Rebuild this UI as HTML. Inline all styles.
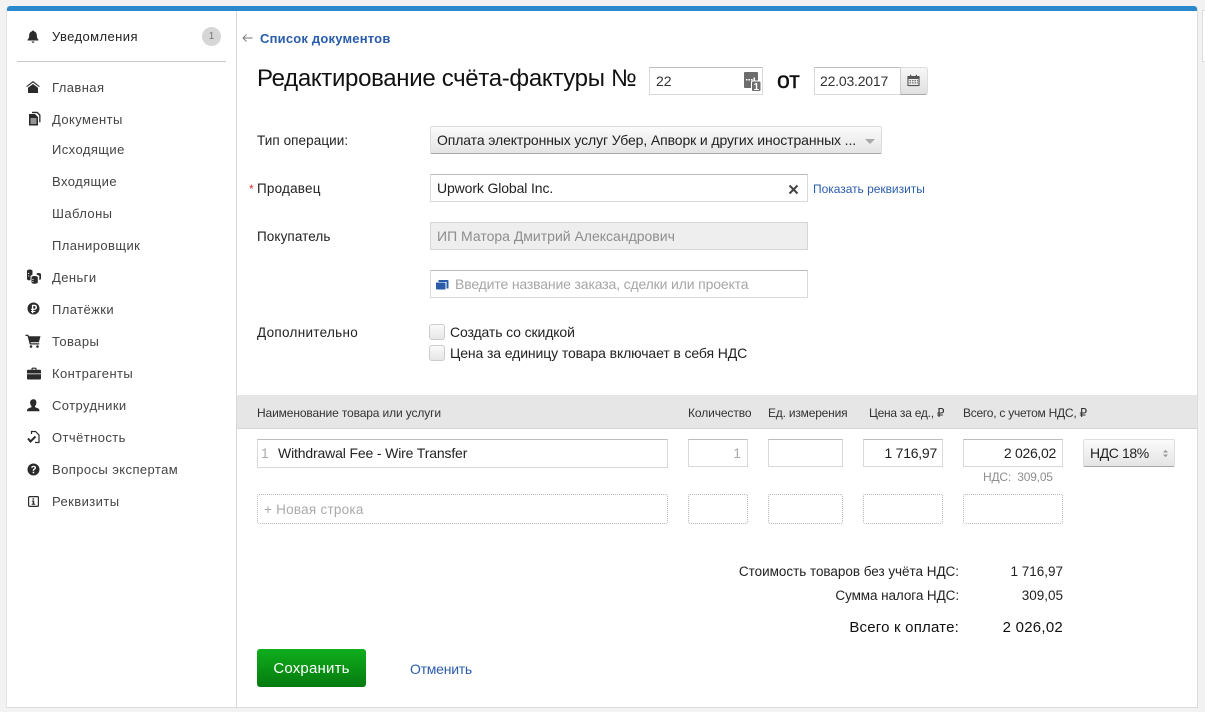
<!DOCTYPE html>
<html lang="ru"><head><meta charset="utf-8"><title>Редактирование счёта-фактуры</title>
<style>
html,body{margin:0;padding:0;width:1205px;height:712px;overflow:hidden;background:#f2f2f2}
body{font-family:"Liberation Sans","DejaVu Sans",sans-serif;font-size:13px;color:#222;position:relative}
.a{position:absolute;box-sizing:border-box}
.t{position:absolute;white-space:nowrap;line-height:18px;height:18px}
.r{text-align:right}
.box{position:absolute;box-sizing:border-box;background:#fff;border:1px solid #d9d9d9;border-top-color:#bcbcbc}
.dot{position:absolute;box-sizing:border-box;background:#fff;border:1px dotted #b8b8b8;border-radius:2px}
.nav{color:#444;letter-spacing:.42px}
.ic{position:absolute;fill:#2b2b2b}
.th{font-size:12px;color:#333}
.f{font-size:14px;color:#222}
.cb{position:absolute;box-sizing:border-box;width:16px;height:16px;border:1px solid #ccc;border-radius:3px;background:linear-gradient(#fafafa,#e6e6e6)}
.sel{position:absolute;box-sizing:border-box;border-radius:2px;background:linear-gradient(#fbfbfb,#e4e4e4);border:1px solid #ddd;border-bottom-color:#a8a8a8}
</style></head><body>

<div class="a" style="left:1202px;top:10px;width:10px;height:52px;background:#fff;border:1px solid #ddd"></div>
<div class="a" style="left:6px;top:6px;width:1192px;height:702px;background:#fff;border-right:1px solid #dcdcdc;border-bottom:1px solid #dcdcdc;border-left:1px solid #e4e4e4;border-radius:3px 3px 0 0"></div>
<div class="a" style="left:7px;top:6px;width:1190px;height:5px;background:#2a88cc;border-radius:3px 3px 0 0"></div>
<div class="a" style="left:236px;top:11px;width:1px;height:696px;background:#d8d8d8"></div>

<!-- sidebar -->
<svg class="ic" style="left:26px;top:29px" width="14" height="15" viewBox="0 0 14 15"><path d="M7 1.500c.6 0 1 .4 1 .9 2 .5 2.800 2 2.800 4 0 2.200.6 3.400 1.700 4.400v.7H1.500v-.7C2.600 9.800 3.200 8.600 3.200 6.400c0-2 .8-3.500 2.800-4 0-.5.4-.9 1-.9zM5.600 12.500h2.800c0 .8-.6 1.300-1.400 1.300s-1.400-.5-1.400-1.300z"/></svg>
<div class="t" style="left:52px;top:28px;color:#222;letter-spacing:.42px">Уведомления</div>
<div class="a" style="left:202px;top:27px;width:19px;height:19px;border-radius:50%;background:#d6d6d6;color:#777;font-size:10px;line-height:19px;text-align:center">1</div>
<div class="a" style="left:17px;top:61px;width:209px;height:1px;background:#c9c9c9"></div>

<svg class="ic" style="left:26px;top:81px" width="14" height="12" viewBox="0 0 14 12"><path d="M7 0l6.800 5.200-.7.800L7 1.500.9 6l-.7-.8zM7 3l5 3.700V12H2V6.700z"/></svg>
<div class="t nav" style="left:52px;top:79px">Главная</div>
<svg class="ic" style="left:28px;top:111px" width="13" height="15" viewBox="0 0 13 15"><path d="M1 3h6l3 3v8.500H1zM2.500 7.500v1h6v-1zM2.500 9.500v1h6v-1zM2.500 11.500v1h6v-1z" fill-rule="evenodd"/><path d="M4 .8h5.500l3 3v7.500h-1.300V4.500L9 2.100H4z"/></svg>
<div class="t nav" style="left:52px;top:111px">Документы</div>
<div class="t nav" style="left:52px;top:141px">Исходящие</div>
<div class="t nav" style="left:52px;top:173px">Входящие</div>
<div class="t nav" style="left:52px;top:205px">Шаблоны</div>
<div class="t nav" style="left:52px;top:237px">Планировщик</div>

<svg class="ic" style="left:26px;top:269px" width="16" height="15" viewBox="0 0 16 15"><path d="M1 2c0-1 1.300-1.500 2.800-1.500S6.500 1 6.500 2v3.500L4.500 7v4.300c-2 .2-3.500-.3-3.500-1.300z"/><path d="M12.500 4c1.300 0 2.500.4 2.500 1.300v4.500c0 .6-.8 1-1.700 1.200V6.800l-2.800-1.300V5c0-.7 1-1 2-1z"/><path d="M8.500 7c1.500 0 3.300.4 3.300 1.400v4.800c0 1-1.600 1.500-3.300 1.500s-3-.5-3-1.500V8.400C5.500 7.400 7 7 8.500 7z"/><path d="M6.300 10h1.200v.9H6.300zM6.300 12h1.200v.9H6.300zM2 4h1.200v.9H2zM2 6.500h1.200v.9H2z" fill="#fff"/></svg>
<div class="t nav" style="left:52px;top:269px">Деньги</div>
<svg class="ic" style="left:27px;top:302px" width="13" height="13" viewBox="0 0 13 13"><path fill-rule="evenodd" d="M6.500.5a6 6 0 1 1 0 12 6 6 0 0 1 0-12zM4.900 2.800v3.900H4v1.200h.9V9H4v1h.9v1.200h1.400V10h2V9h-2V7.900h1.200c1.500 0 2.500-1 2.500-2.600S8.900 2.800 7.500 2.800zM6.300 4h1.100c.7 0 1.100.5 1.100 1.300s-.4 1.400-1.100 1.400H6.300z"/></svg>
<div class="t nav" style="left:52px;top:301px">Платёжки</div>
<svg class="ic" style="left:25px;top:334px" width="16" height="14" viewBox="0 0 16 14"><path d="M.5 .8h2.800l.6 1.500h11.600l-1.600 6H5.600l.3 1h8.300v1.200H4.800L2.500 2H.5z"/><circle cx="6" cy="12.500" r="1.300"/><circle cx="12.500" cy="12.500" r="1.300"/></svg>
<div class="t nav" style="left:52px;top:333px">Товары</div>
<svg class="ic" style="left:27px;top:367px" width="14" height="13" viewBox="0 0 14 13"><path fill-rule="evenodd" d="M4.500 2.800V1.500c0-.5.400-.9 1-.9h3c.6 0 1 .4 1 .9v1.300H13c.6 0 1 .4 1 1v2.700H0V3.800c0-.6.400-1 1-1zM5.600 1.700v1.100h2.800V1.700z"/><path d="M0 7.300h14v4.200c0 .6-.4 1-1 1H1c-.6 0-1-.4-1-1z"/></svg>
<div class="t nav" style="left:52px;top:365px">Контрагенты</div>
<svg class="ic" style="left:27px;top:399px" width="13" height="13" viewBox="0 0 13 13"><path d="M6.500.3c1.800 0 2.900 1.300 2.900 3.200 0 1.500-.6 2.900-1.400 3.600v1c1 .6 4.400 1.100 4.400 3v1.200H.1v-1.200c0-1.900 3.400-2.400 4.400-3v-1c-.8-.7-1.400-2.100-1.400-3.600C3.100 1.600 4.700.3 6.500.3z"/></svg>
<div class="t nav" style="left:52px;top:397px">Сотрудники</div>
<svg class="ic" style="left:27px;top:430px" width="13" height="14" viewBox="0 0 13 14" fill="none" stroke="#2b2b2b"><path d="M4.500 4V1.500h4l3.500 3.500v7.500H8" stroke-width="1.200" fill="none"/><path d="M1 8.500l2.500 3L8.500 6.500" stroke-width="2" fill="none"/></svg>
<div class="t nav" style="left:52px;top:429px">Отчётность</div>
<svg class="ic" style="left:27px;top:463px" width="13" height="13" viewBox="0 0 13 13"><path fill-rule="evenodd" d="M6.500.5a6 6 0 1 1 0 12 6 6 0 0 1 0-12zM6.600 2.700c-1.400 0-2.400.7-2.500 2.100h1.500c.1-.6.400-.9 1-.9.500 0 .9.300.9.800 0 .4-.3.700-.8 1.100-.8.500-1 1-1 2h1.400c0-.6.100-.8.700-1.200.7-.5 1.200-1 1.200-1.900 0-1.200-1-2-2.400-2zM5.700 8.700v1.500h1.500V8.700z"/></svg>
<div class="t nav" style="left:52px;top:461px">Вопросы экспертам</div>
<svg class="ic" style="left:28px;top:496px" width="11" height="11" viewBox="0 0 11 11"><rect x=".6" y=".6" width="9.800" height="9.800" rx="1" fill="none" stroke="#2b2b2b" stroke-width="1.200"/><path d="M4.500 2.300h1.600v1.300H4.500zM3.800 4.500h2.400v3.300H7.300v1H3.700v-1h1V5.500h-.9z"/></svg>
<div class="t nav" style="left:52px;top:493px">Реквизиты</div>

<!-- header -->
<svg class="a" style="left:242px;top:33px" width="11" height="10" viewBox="0 0 11 10"><path d="M10.500 5H1.200M4.500 1.500L1 5l3.500 3.500" fill="none" stroke="#777" stroke-width=".9"/></svg>
<div class="t" style="left:260px;top:30px;color:#2a5caa;font-weight:bold;letter-spacing:.2px">Список документов</div>
<div class="t" style="left:257px;top:64px;height:30px;line-height:30px;font-size:24px;color:#111;letter-spacing:-.32px">Редактирование счёта-фактуры №</div>

<div class="box" style="left:649px;top:67px;width:114px;height:28px"></div>
<div class="t f" style="left:656px;top:72px;color:#333">22</div>
<svg class="a" style="left:743px;top:71px" width="18" height="21" viewBox="0 0 18 21"><path d="M2 1h12c.6 0 1 .4 1 1v15H2c-.6 0-1-.4-1-1V2c0-.6.400-1 1-1z" fill="#6d6d6d"/><path d="M3 8h1.500v1.500H3zM5.500 8H7v1.500H5.500zM8 8h1.500v1.500H8zM10.500 6.500H12v3h-1.500z" fill="#fff"/><rect x="8" y="9.500" width="10" height="11" rx="1.500" fill="#fff"/><rect x="9" y="10.500" width="8.500" height="9.500" rx="1" fill="#6d6d6d"/><text x="10.500" y="19" font-size="10" font-weight="bold" fill="#fff" font-family="Liberation Sans">1</text></svg>
<div class="t" style="left:777px;top:66px;height:28px;line-height:28px;font-size:23px;color:#111;-webkit-text-stroke:.4px #111">от</div>
<div class="box" style="left:814px;top:67px;width:87px;height:28px"></div>
<div class="t f" style="left:820px;top:72px;color:#333;letter-spacing:-.2px">22.03.2017</div>
<div class="a" style="left:900px;top:67px;width:28px;height:28px;border-radius:0 3px 3px 0;background:linear-gradient(#f7f7f7,#e0e0e0);border:1px solid #ddd;border-bottom-color:#aaa;border-left-color:#ccc"></div>
<svg class="a" style="left:907px;top:74px" width="13" height="13" viewBox="0 0 13 13"><path fill-rule="evenodd" d="M1 2h2V.8h1.200V2h4.600V.8H10V2h2c.4 0 .6.200.6.600V11.500c0 .4-.2.600-.6.600H1c-.4 0-.6-.2-.6-.6V2.600C.4 2.200.6 2 1 2zM1.500 5v6h10V5z" fill="#555"/><path d="M2.500 6h1.500v1.200H2.500zM5 6h1.500v1.200H5zM7.500 6H9v1.200H7.500zM10 6h1v1.200h-1zM2.500 8.300h1.500v1.200H2.500zM5 8.300h1.500v1.200H5zM7.500 8.300H9v1.200H7.500zM10 8.300h1v1.200h-1z" fill="#777"/></svg>

<!-- form -->
<div class="t f" style="left:257px;top:132px;color:#222;font-size:13.500px;letter-spacing:.08px">Тип операции:</div>
<div class="sel" style="left:430px;top:126px;width:452px;height:28px"></div>
<div class="t f" style="left:437px;top:131px;color:#222;letter-spacing:-.11px">Оплата электронных услуг Убер, Апворк и других иностранных ...</div>
<div class="a" style="left:865px;top:139px;width:0;height:0;border-left:5px solid transparent;border-right:5px solid transparent;border-top:5px solid #aaa"></div>

<div class="t" style="left:249px;top:180px;color:#d9302c;font-size:12px">*</div>
<div class="t f" style="left:257px;top:180px;font-size:13.500px;letter-spacing:.2px">Продавец</div>
<div class="box" style="left:430px;top:174px;width:378px;height:28px"></div>
<div class="t f" style="left:437px;top:179px;letter-spacing:-.12px">Upwork Global Inc.</div>
<svg class="a" style="left:788px;top:184px" width="11" height="11" viewBox="0 0 11 11"><path d="M1.500 1.500l8 8M9.500 1.500l-8 8" stroke="#444" stroke-width="2" fill="none"/></svg>
<div class="t" style="left:813px;top:180px;color:#2a5caa;font-size:12px;letter-spacing:-.03px">Показать реквизиты</div>

<div class="t f" style="left:257px;top:228px;font-size:13.500px;letter-spacing:.1px">Покупатель</div>
<div class="box" style="left:430px;top:222px;width:378px;height:28px;background:#eeeeee;border-color:#d6d6d6"></div>
<div class="t f" style="left:437px;top:227px;color:#8d8d8d;letter-spacing:0">ИП Матора Дмитрий Александрович</div>

<div class="box" style="left:430px;top:270px;width:378px;height:28px"></div>
<svg class="a" style="left:436px;top:279px" width="13" height="11" viewBox="0 0 13 11"><path d="M0 3.500h8.500c.5 0 1 .4 1 1V10.500H1c-.6 0-1-.4-1-1z" fill="#2a5caa"/><path d="M2.500 1h9c.6 0 1 .4 1 1v7.500h-2V3H2.500z" fill="#2a5caa"/></svg>
<div class="t f" style="left:455px;top:275px;color:#a6a6a6;letter-spacing:-.15px">Введите название заказа, сделки или проекта</div>

<div class="t f" style="left:257px;top:324px;font-size:13.500px;letter-spacing:.3px">Дополнительно</div>
<div class="cb" style="left:429px;top:324px"></div>
<div class="t f" style="left:450px;top:323px;letter-spacing:-.12px">Создать со скидкой</div>
<div class="cb" style="left:429px;top:345px"></div>
<div class="t f" style="left:450px;top:344px;letter-spacing:-.11px">Цена за единицу товара включает в себя НДС</div>

<!-- table -->
<div class="a" style="left:237px;top:395px;width:960px;height:34px;background:#e6e6e6;border-bottom:1px solid #d5d5d5"></div>
<div class="t th" style="left:257px;top:404px;letter-spacing:-.13px">Наименование товара или услуги</div>
<div class="t th" style="left:688px;top:404px;letter-spacing:-.1px">Количество</div>
<div class="t th" style="left:768px;top:404px;letter-spacing:-.2px">Ед. измерения</div>
<div class="t th" style="left:869px;top:404px;letter-spacing:-.25px">Цена за ед., ₽</div>
<div class="t th" style="left:963px;top:404px;letter-spacing:-.25px">Всего, с учетом НДС, ₽</div>

<div class="box" style="left:257px;top:439px;width:411px;height:29px"></div>
<div class="t f" style="left:261px;top:444px;color:#aaa">1</div>
<div class="t f" style="left:278px;top:444px;letter-spacing:-.15px">Withdrawal Fee - Wire Transfer</div>
<div class="box" style="left:688px;top:439px;width:60px;height:28px"></div>
<div class="t f r" style="left:688px;top:444px;width:53px;color:#aaa">1</div>
<div class="box" style="left:768px;top:439px;width:75px;height:28px"></div>
<div class="box" style="left:863px;top:439px;width:80px;height:28px"></div>
<div class="t f r" style="left:863px;top:444px;width:74px;letter-spacing:-.25px">1 716,97</div>
<div class="box" style="left:963px;top:439px;width:100px;height:28px"></div>
<div class="t f r" style="left:963px;top:444px;width:93px;letter-spacing:-.3px">2 026,02</div>
<div class="sel" style="left:1083px;top:439px;width:92px;height:28px"></div>
<div class="t f" style="left:1090px;top:444px;letter-spacing:-.4px">НДС 18%</div>
<svg class="a" style="left:1162px;top:449px" width="7" height="9" viewBox="0 0 7 9"><path d="M3.500 .8L6 3.500H1zM3.500 8.200L1 5.500h5z" fill="#999"/></svg>
<div class="t" style="left:983px;top:468px;font-size:12px;color:#8f8f8f;letter-spacing:-.2px">НДС:&nbsp; 309,05</div>

<div class="dot" style="left:257px;top:494px;width:411px;height:30px"></div>
<div class="t f" style="left:264px;top:501px;color:#aaa;font-size:13.500px;letter-spacing:.25px">+ Новая строка</div>
<div class="dot" style="left:688px;top:494px;width:60px;height:30px"></div>
<div class="dot" style="left:768px;top:494px;width:75px;height:30px"></div>
<div class="dot" style="left:863px;top:494px;width:80px;height:30px"></div>
<div class="dot" style="left:963px;top:494px;width:100px;height:30px"></div>

<!-- totals -->
<div class="t f r" style="left:600px;top:563px;width:359px;font-size:13.500px;letter-spacing:-.03px">Стоимость товаров без учёта НДС:</div>
<div class="t f r" style="left:963px;top:563px;width:100px;font-size:13.500px;letter-spacing:0">1 716,97</div>
<div class="t f r" style="left:600px;top:587px;width:359px;font-size:13.500px;letter-spacing:-.08px">Сумма налога НДС:</div>
<div class="t f r" style="left:963px;top:587px;width:100px;font-size:13.500px;letter-spacing:0">309,05</div>
<div class="t r" style="left:600px;top:619px;width:359px;font-size:15px;color:#111;letter-spacing:.2px">Всего к оплате:</div>
<div class="t r" style="left:963px;top:619px;width:100px;font-size:15px;color:#111;letter-spacing:.25px">2 026,02</div>

<div class="a" style="left:257px;top:649px;width:109px;height:38px;border-radius:3px;background:linear-gradient(#0fae1c,#067a10);color:#fff;font-size:15px;line-height:40px;text-align:center;letter-spacing:.2px">Сохранить</div>
<div class="t" style="left:410px;top:660px;color:#2a5caa;font-size:14px;letter-spacing:-.25px">Отменить</div>

</body></html>
